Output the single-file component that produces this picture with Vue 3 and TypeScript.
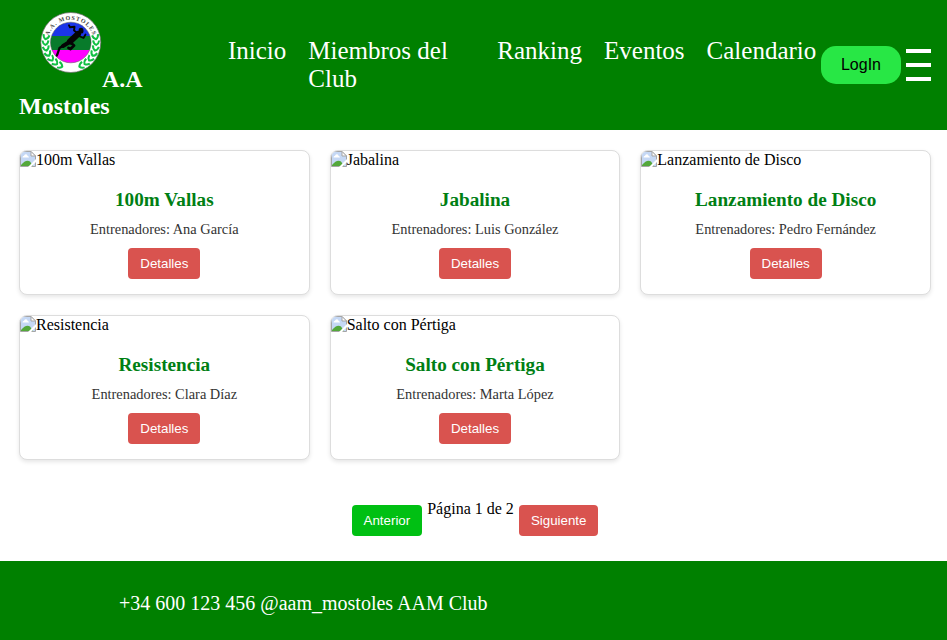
<script setup lang="ts">
import { ref } from 'vue'

interface Discipline {
  name: string
  coach: string
}

const links: string[] = ['Inicio', 'Miembros del Club', 'Ranking', 'Eventos', 'Calendario']
const disciplines: Discipline[] = [
  { name: '100m Vallas', coach: 'Ana García' },
  { name: 'Jabalina', coach: 'Luis González' },
  { name: 'Lanzamiento de Disco', coach: 'Pedro Fernández' },
  { name: 'Resistencia', coach: 'Clara Díaz' },
  { name: 'Salto con Pértiga', coach: 'Marta López' },
]
const page = ref(1)
const totalPages = 2

// Angles of the laurel leaves on one side of the badge, measured from the top.
const leaves: number[] = [78, 91, 104, 117, 130, 143, 156]
</script>

<template>
  <div class="page">
    <header class="header">
      <h1 class="brand">
        <svg class="logo" viewBox="0 0 62 62" aria-hidden="true">
          <defs>
            <clipPath id="disc"><circle cx="30.800" cy="30.500" r="20.300" /></clipPath>
            <path id="arc" d="M7.900 36A23.400 23.400 0 1 1 53.700 36" />
          </defs>
          <circle cx="30.800" cy="30.500" r="30" fill="#fff" stroke="#666" stroke-width="0.7" />
          <g clip-path="url(#disc)">
            <rect x="9" y="9" width="44" height="15" fill="#1c35e8" />
            <rect x="9" y="24" width="44" height="14" fill="#087b2b" />
            <rect x="9" y="38" width="44" height="15" fill="#f0f" />
          </g>
          <circle cx="30.800" cy="30.500" r="20.300" fill="none" stroke="#555" stroke-width="0.5" />
          <text class="badge-text"><textPath href="#arc" startOffset="50%" text-anchor="middle">A.A. MOSTOLES</textPath></text>
          <g fill="none" stroke="#12c044" stroke-width="2">
            <g v-for="a in leaves" :key="a">
              <path :transform="`rotate(${a} 30.8 30.5)`" d="M28.300 2.200Q31.500 2.500 32.800 5Q31.500 7.800 28.300 8.200" />
              <path :transform="`rotate(${-a} 30.8 30.5)`" d="M33.300 2.200Q30.100 2.500 28.800 5Q30.100 7.800 33.300 8.200" />
            </g>
          </g>
          <g fill="none" stroke="#050505" stroke-linecap="round" stroke-linejoin="round">
            <path d="M29 13.300L30 15.300L34.500 14.800L34 18.500L38 21.500" stroke-width="1.900" />
            <path d="M38 22L30 29.500" stroke-width="6" />
            <path d="M40 24.500L43.500 26L45.500 22.500" stroke-width="1.800" />
            <path d="M28 30.500L19.500 36L17.500 42L16.800 43.500" stroke-width="2.300" />
            <path d="M28 31L23 34" stroke-width="4" />
            <path d="M31 31L34 33.500L30.500 37L28.500 36" stroke-width="2.800" />
          </g>
          <ellipse cx="41" cy="18.700" rx="2.500" ry="2.900" fill="#050505" />
        </svg>A.A Mostoles
      </h1>
      <nav class="nav">
        <a v-for="link in links" :key="link" :class="{ wraps: link.length > 12 }">{{ link }}</a>
      </nav>
      <div class="actions">
        <button class="login">LogIn</button>
        <div class="burger"><span /><span /><span /></div>
      </div>
    </header>

    <main class="grid">
      <article v-for="d in disciplines" :key="d.name" class="card">
        <div class="picture">
          <svg class="broken" viewBox="0 0 16 16" aria-hidden="true">
            <path d="M0.500 0.500H11L15.500 5V15.500H0.500Z" fill="#c5d8f5" stroke="#a5a5a5" />
            <path d="M11 0.500V5H15.500Z" fill="#fff" stroke="#a5a5a5" />
            <path d="M2.500 6.500Q2.500 4.700 4 4.700Q4.500 3 6 3.200Q7.500 3.300 7.600 5Q9 5.200 9 6.500Z" fill="#fff" />
            <path d="M1 15V14Q6 8 10 10.500L13 15Z" fill="#54a83b" />
            <path d="M8 16L16 8V11L11 16Z" fill="#fff" />
          </svg><span>{{ d.name }}</span>
        </div>
        <div class="body">
          <h2>{{ d.name }}</h2>
          <p>Entrenadores: {{ d.coach }}</p>
          <button class="btn">Detalles</button>
        </div>
      </article>
    </main>

    <div class="pager">
      <button class="btn previous" @click="page = Math.max(1, page - 1)">Anterior</button>
      <span>Página {{ page }} de {{ totalPages }}</span>
      <button class="btn" @click="page = Math.min(totalPages, page + 1)">Siguiente</button>
    </div>

    <footer class="footer">+34 600 123 456 @aam_mostoles AAM Club</footer>
  </div>
</template>

<style>
body {
  margin: 0;
  background: #fff;
}
</style>

<style scoped>
.page {
  height: 640px;
  display: flex;
  flex-direction: column;
  overflow: hidden;
  font-family: "Liberation Serif", serif;
  font-size: 16px;
  color: #000;
}
.header {
  height: 130px;
  box-sizing: border-box;
  flex: none;
  display: flex;
  background: green;
  color: #fff;
  padding: 0 16px 0 19px;
}
.brand {
  width: 209px;
  flex: none;
  box-sizing: border-box;
  padding: 12px 70px 0 0;
  margin: 0;
  font-size: 24px;
  line-height: 27px;
}
.logo {
  width: 62px;
  height: 62px;
  margin: 0 0 0 21px;
  vertical-align: 13px;
}
.badge-text {
  font: bold 6px "Liberation Serif", serif;
  letter-spacing: 0.900px;
  fill: #444;
}
.nav {
  display: flex;
  gap: 22px;
  padding-top: 37px;
  font-size: 25px;
  line-height: 28px;
}
.wraps {
  width: 167px;
}
.actions {
  display: flex;
  align-items: center;
  gap: 5px;
  margin-left: auto;
}
.login {
  width: 80px;
  height: 38px;
  padding: 0;
  border: 0;
  border-radius: 15px;
  background: #28e745;
  font: 16px "Liberation Sans", sans-serif;
  color: #000;
}
.burger {
  display: flex;
  flex-direction: column;
  gap: 10px;
}
.burger span {
  width: 25px;
  height: 4px;
  background: #fff;
}
.grid {
  flex: none;
  display: grid;
  grid-template-columns: repeat(3, 1fr);
  grid-auto-rows: 145px;
  gap: 20px;
  padding: 20px 16px 0 19px;
}
.card {
  border: 1px solid #ddd;
  border-radius: 8px;
  overflow: hidden;
  background: #fff;
  box-shadow: 0 2px 4px rgba(0, 0, 0, 0.1);
}
.picture {
  display: flex;
  height: 18px;
}
.broken {
  width: 16px;
  height: 16px;
  flex: none;
}
.body {
  padding: 20px 15px 0;
  text-align: center;
}
h2 {
  margin: 0 0 9px;
  font-size: 19.200px;
  line-height: 22px;
  color: #007f14;
}
p {
  margin: 0 0 9px;
  font-size: 14.400px;
  line-height: 19px;
  color: #333;
}
.btn {
  display: inline-block;
  height: 31px;
  padding: 0 12px;
  border: 0;
  border-radius: 4px;
  background: #d9534f;
  color: #fff;
  font: 13.333px "Liberation Sans", sans-serif;
}
.pager {
  flex: none;
  display: flex;
  justify-content: center;
  gap: 5px;
  padding: 40px 0 0 3px;
}
.pager .btn {
  margin-top: 5px;
}
.previous {
  background: #00c013;
}
.footer {
  height: 79px;
  flex: none;
  margin-top: auto;
  box-sizing: border-box;
  padding: 31px 119px 0;
  background: green;
  color: #fff;
  font-size: 20px;
  line-height: 23px;
}
</style>
